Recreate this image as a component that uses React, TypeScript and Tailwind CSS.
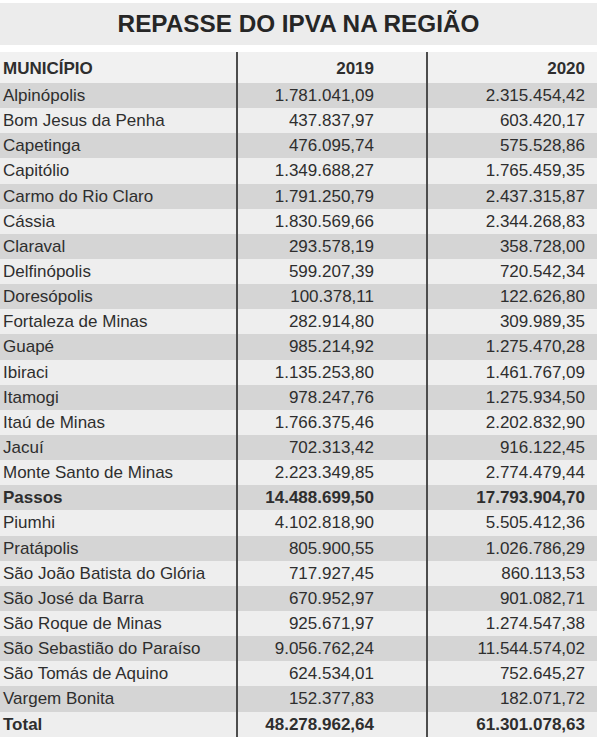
const rows = [
  ['Alpinópolis', '1.781.041,09', '2.315.454,42'],
  ['Bom Jesus da Penha', '437.837,97', '603.420,17'],
  ['Capetinga', '476.095,74', '575.528,86'],
  ['Capitólio', '1.349.688,27', '1.765.459,35'],
  ['Carmo do Rio Claro', '1.791.250,79', '2.437.315,87'],
  ['Cássia', '1.830.569,66', '2.344.268,83'],
  ['Claraval', '293.578,19', '358.728,00'],
  ['Delfinópolis', '599.207,39', '720.542,34'],
  ['Doresópolis', '100.378,11', '122.626,80'],
  ['Fortaleza de Minas', '282.914,80', '309.989,35'],
  ['Guapé', '985.214,92', '1.275.470,28'],
  ['Ibiraci', '1.135.253,80', '1.461.767,09'],
  ['Itamogi', '978.247,76', '1.275.934,50'],
  ['Itaú de Minas', '1.766.375,46', '2.202.832,90'],
  ['Jacuí', '702.313,42', '916.122,45'],
  ['Monte Santo de Minas', '2.223.349,85', '2.774.479,44'],
  ['Passos', '14.488.699,50', '17.793.904,70'],
  ['Piumhi', '4.102.818,90', '5.505.412,36'],
  ['Pratápolis', '805.900,55', '1.026.786,29'],
  ['São João Batista do Glória', '717.927,45', '860.113,53'],
  ['São José da Barra', '670.952,97', '901.082,71'],
  ['São Roque de Minas', '925.671,97', '1.274.547,38'],
  ['São Sebastião do Paraíso', '9.056.762,24', '11.544.574,02'],
  ['São Tomás de Aquino', '624.534,01', '752.645,27'],
  ['Vargem Bonita', '152.377,83', '182.071,72'],
  ['Total', '48.278.962,64', '61.301.078,63'],
];

const bold = ['Passos', 'Total'];

export default function App() {
  return (
    <div className="w-[600px] h-[737px] overflow-hidden bg-white text-[#2e2e2e] font-['Liberation_Sans',Arial,sans-serif]">
      {/* Title */}
      <div className="mt-[3px] w-[597px] h-[42px] bg-[#ececec] flex items-center justify-center">
        <h1 className="text-[24.3px] font-bold text-[#262626] leading-none">REPASSE DO IPVA NA REGIÃO</h1>
      </div>

      {/* Table */}
      <div className="mt-[7px] w-[597px]">
        <div className="grid grid-cols-[236px_190px_171px] h-[31px] bg-[#f1f1f1] text-[17px] font-bold items-stretch">
          <div className="pl-[3px] pt-[2px] flex items-center">MUNICÍPIO</div>
          <div className="border-l-2 border-[#4d4d4d] pt-[2px] pr-[52px] flex items-center justify-end">2019</div>
          <div className="border-l-2 border-[#4d4d4d] pt-[2px] pr-[12px] flex items-center justify-end">2020</div>
        </div>
        {rows.map(([name, a, b], i) => (
          <div
            key={name}
            className={`grid grid-cols-[236px_190px_171px] h-[25.15px] text-[17px] leading-none ${i % 2 === 0 ? 'bg-[#d5d5d5]' : 'bg-[#eeeeee]'} ${bold.includes(name) ? 'font-bold' : ''}`}
          >
            <div className="pl-[3px] flex items-center whitespace-nowrap">{name}</div>
            <div className="border-l-2 border-[#4d4d4d] pr-[52px] flex items-center justify-end">{a}</div>
            <div className="border-l-2 border-[#4d4d4d] pr-[12px] flex items-center justify-end">{b}</div>
          </div>
        ))}
      </div>
    </div>
  );
}
